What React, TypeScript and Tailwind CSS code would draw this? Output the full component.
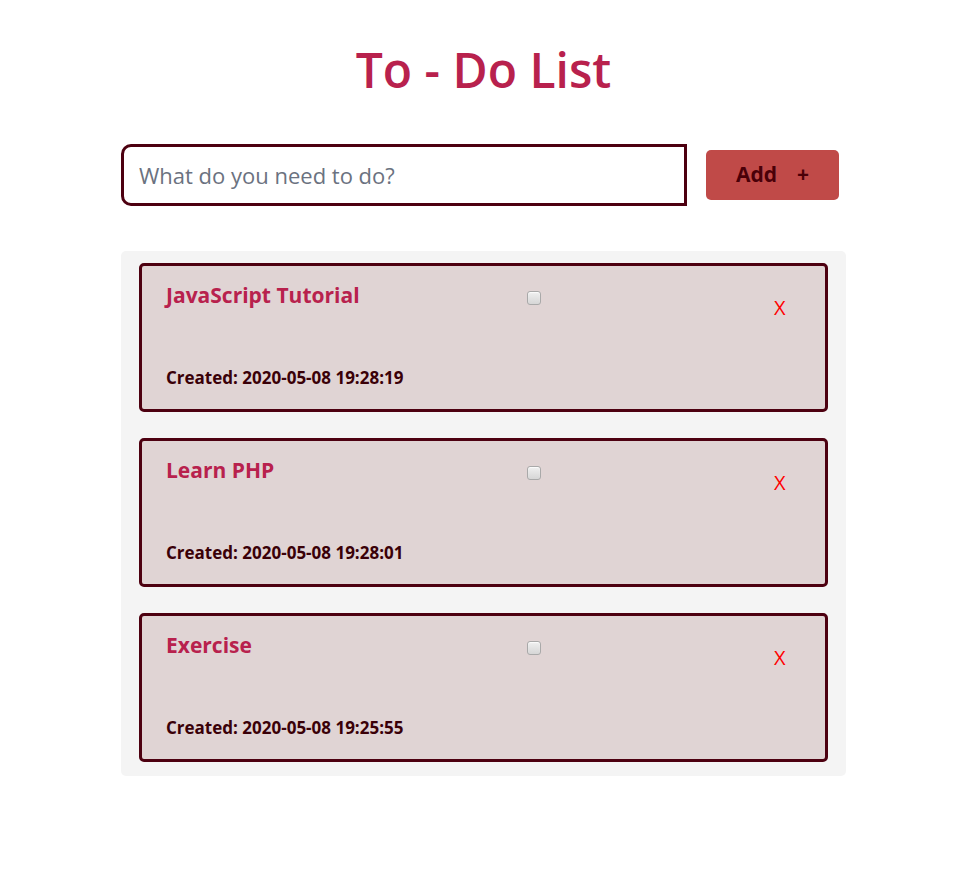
import React from "react";

const todos = [
  { title: "JavaScript Tutorial", created: "2020-05-08 19:28:19" },
  { title: "Learn PHP", created: "2020-05-08 19:28:01" },
  { title: "Exercise", created: "2020-05-08 19:25:55" },
];

function TodoItem({ title, created }: { title: string; created: string }) {
  return (
    <div className="h-[149px] rounded-[5px] border-[3px] border-[#4d0010] bg-[#e0d4d4] pl-[24px]">
      <div className="flex pt-[15px]">
        <h3 className="w-[361px] text-[21px] font-bold leading-[28px] text-[#b8214d]">{title}</h3>
        <input
          type="checkbox"
          className="mt-[10px] h-[14px] w-[14px] appearance-none rounded-[3px] border border-[#a9a9a9] bg-gradient-to-b from-[#f0f0f0] to-[#d6d6d6] shadow-[inset_0_1px_1px_rgba(255,255,255,0.8)]"
        />
        <button className="ml-[233px] mt-[15px] text-[20px] leading-[24px] text-[#ff0000]">X</button>
      </div>
      <p className="mt-[46px] text-[17px] font-bold leading-[24px] text-[#3a0008]">Created: {created}</p>
    </div>
  );
}

export default function App() {
  return (
    <div
      className="min-h-screen bg-white pl-[121px]"
      style={{ fontFamily: '"Open Sans", "Noto Sans", sans-serif' }}
    >
      <div className="w-[725px] pt-[38px]">
        <h1 className="text-center text-[48px] font-semibold leading-[64px] text-[#b8214d]">
          To - Do List
        </h1>
        <div className="mt-[42px] flex items-center">
          <input
            placeholder="What do you need to do?"
            className="h-[62px] w-[566px] rounded-l-[10px] border-[3px] border-[#4d0010] px-[15px] text-[22px] text-gray-700 outline-none placeholder:text-[#6b7280]"
          />
          <button className="ml-[19px] flex h-[50px] w-[133px] items-center justify-center gap-[20px] rounded-[5px] bg-[#c04a48] text-[21px] font-bold text-[#4a0008]">
            <span>Add</span>
            <span>+</span>
          </button>
        </div>
        <div className="mt-[45px] flex flex-col gap-[26px] rounded-[5px] bg-[#f4f4f4] px-[18px] pb-[14px] pt-[12px]">
          {todos.map((t) => (
            <TodoItem key={t.title} title={t.title} created={t.created} />
          ))}
        </div>
      </div>
    </div>
  );
}
